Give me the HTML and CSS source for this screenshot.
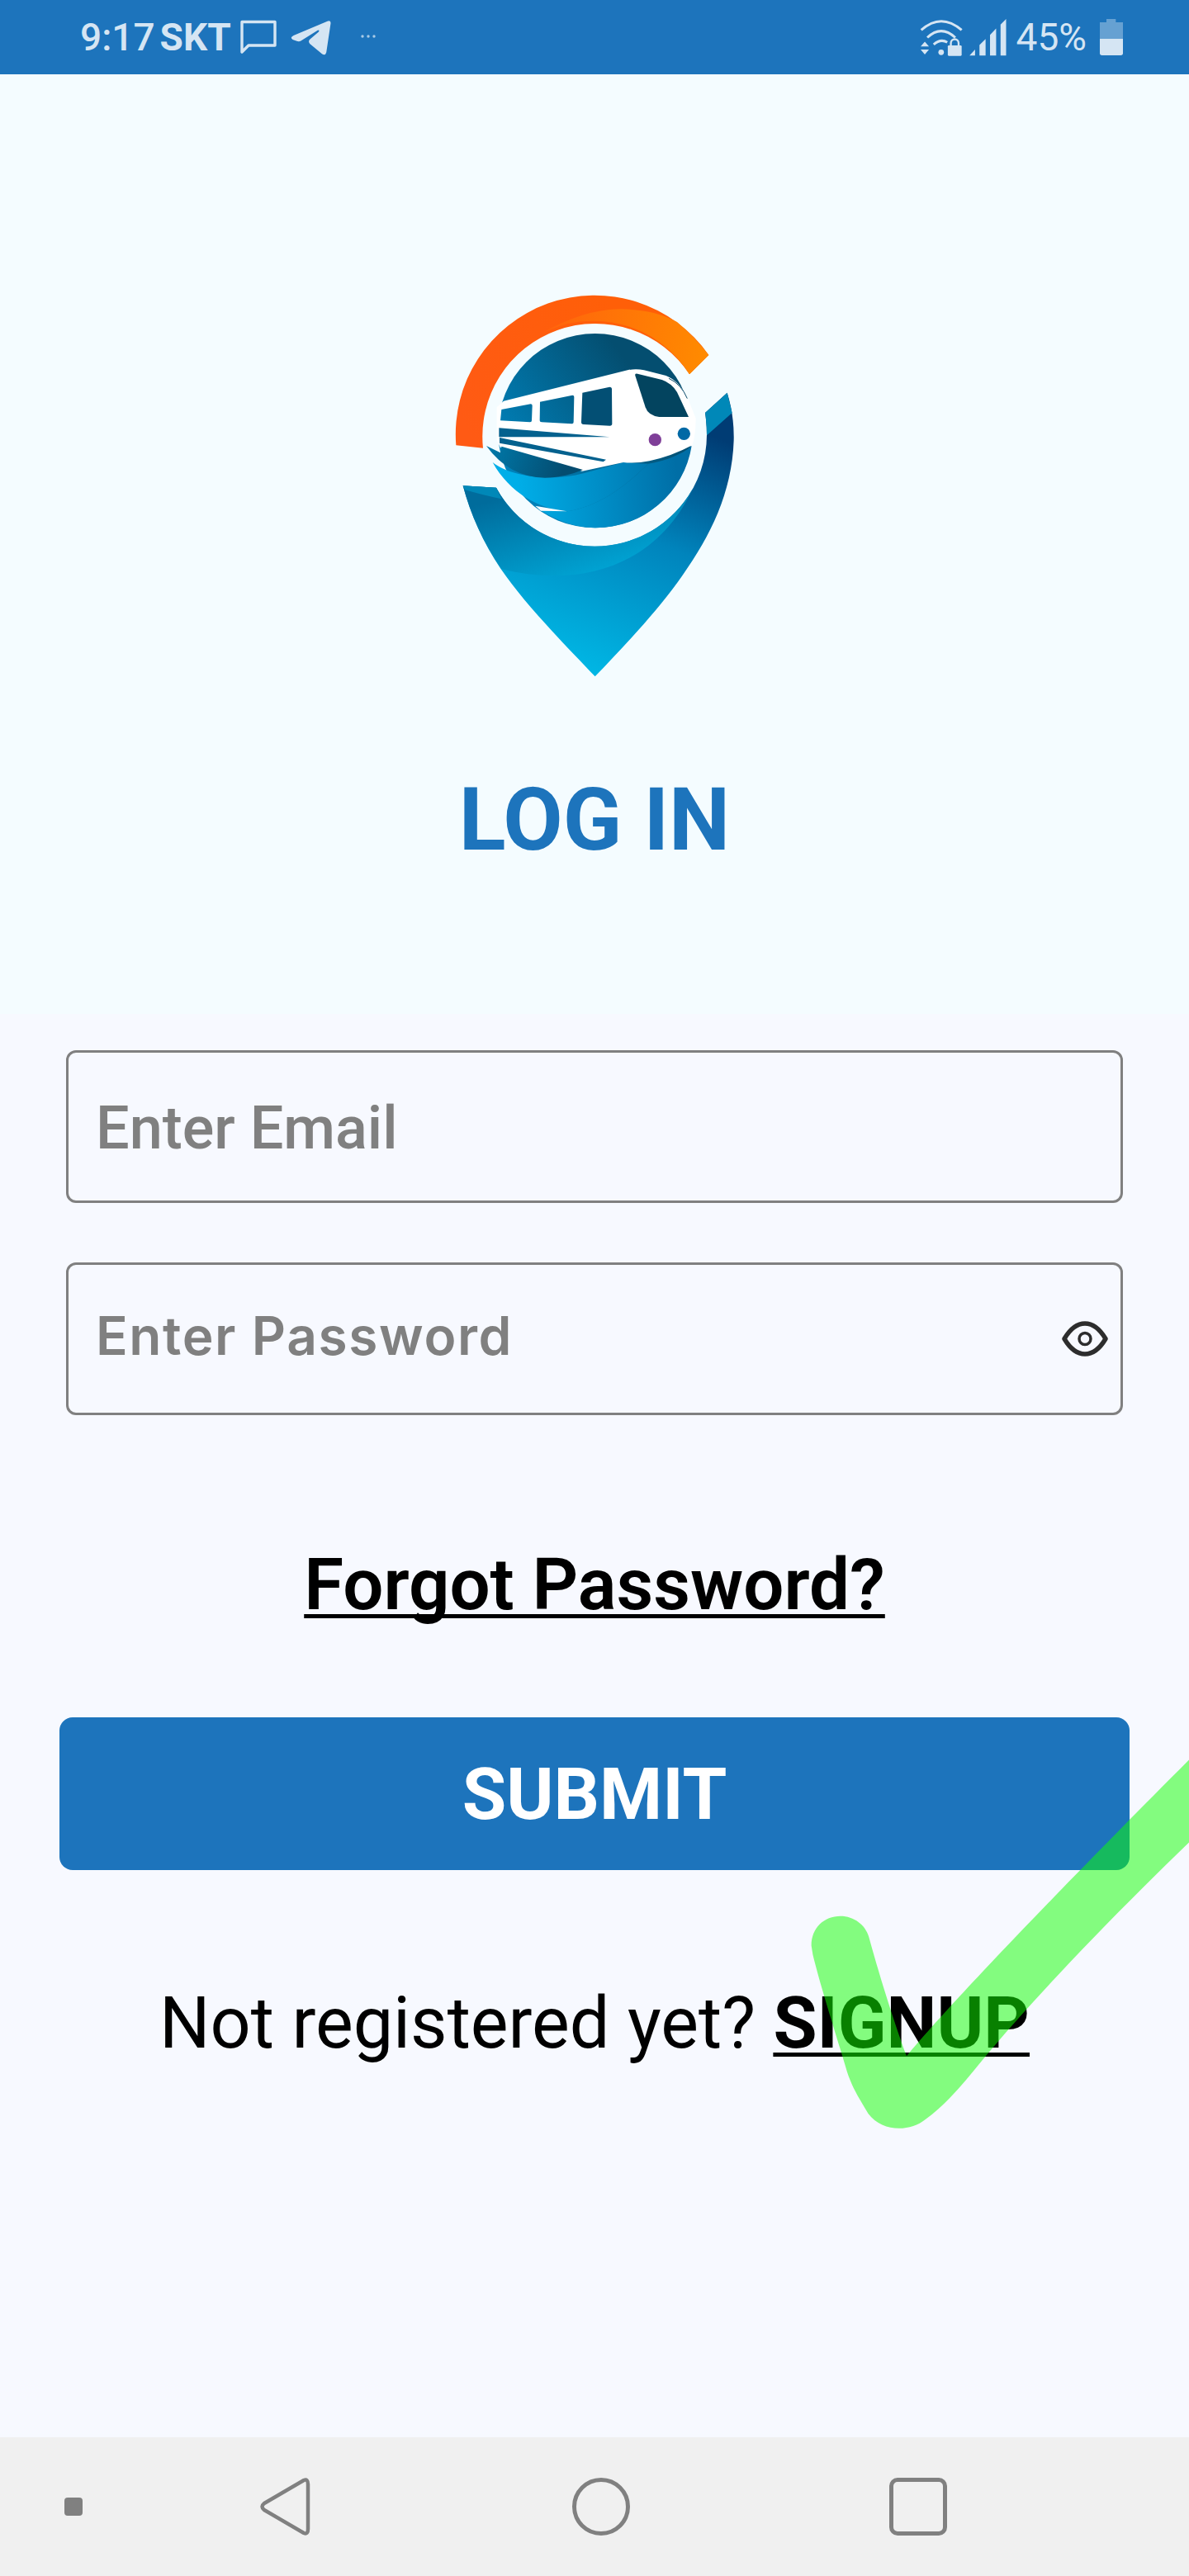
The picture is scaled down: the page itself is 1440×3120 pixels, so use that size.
FILE: index.html
```html
<!DOCTYPE html>
<html lang="en">
<head>
    <meta charset="UTF-8">
    <meta name="viewport" content="width=device-width, initial-scale=1.0">
    <title>Log In</title>
    <link rel="stylesheet" href="styles.css">
</head>
<body>
<div class="app">
    <!-- status bar -->
    <div class="status-bar">
        <div class="status-left">
            <span class="clock">9:17</span>
            <span class="carrier">SKT</span>
            <svg class="icon-chat" viewBox="0 0 44 42"><path d="M2 2.5 H42 V31 H10 L2 39 Z" fill="none" stroke="#d5e5f3" stroke-width="3.4" stroke-linejoin="round"/></svg>
            <svg class="icon-telegram" viewBox="815 45 148 128"><path d="M950 47 Q963 43 962 56 L946 162 Q942 176 930 168 L885 130 Q878 122 885 114 L918 86 Q922 78 914 81 L852 120 Q845 124 835 120 L822 115 Q810 108 825 100 Z" fill="#d5e5f3"/></svg>
            <svg class="icon-dots" viewBox="0 0 18 4"><circle cx="2" cy="2" r="1.7"/><circle cx="9" cy="2" r="1.7"/><circle cx="16" cy="2" r="1.7"/></svg>
        </div>
        <div class="status-right">
            <svg class="icon-wifi" viewBox="35 38 155 134">
                <g fill="none" stroke="#d5e5f3" stroke-width="9">
                    <path d="M40 78 Q112 14 186 78"/>
                    <path d="M62 105 Q112 58 163 105"/>
                    <path d="M85 130 Q110 108 134 122"/>
                </g>
                <circle cx="112" cy="158" r="10" fill="#d5e5f3"/>
                <path d="M38 137 H68 L53 120 Z M38 148 H68 L53 166 Z" fill="#d5e5f3"/>
                <rect x="136" y="133" width="50" height="38" rx="4" fill="#d5e5f3"/>
                <path d="M147 135 V125 A14 14 0 0 1 175 125 V135" fill="none" stroke="#d5e5f3" stroke-width="7"/>
            </svg>
            <svg class="icon-signal" viewBox="218 38 133 134"><path d="M218 170 H238 V148 Z M254 170 H276 V110 L254 132 Z M292 170 H314 V72 L292 95 Z M330 170 H350 V38 L330 58 Z" fill="#d5e5f3"/></svg>
            <span class="battery-text">45%</span>
            <svg class="icon-battery" viewBox="694 40 84 132">
                <path d="M718 40 H752 V52 H778 V112 H694 V52 H718 Z" fill="#d5e5f3" opacity="0.4"/>
                <path d="M694 112 H778 V164 Q778 172 770 172 H702 Q694 172 694 164 Z" fill="#d5e5f3"/>
            </svg>
        </div>
    </div>

    <!-- logo and title -->
    <div class="hero">
        <svg class="logo" viewBox="0 0 1200 1530">
            <defs>
                <linearGradient id="arcRed" gradientUnits="userSpaceOnUse" x1="100" y1="500" x2="700" y2="200"><stop offset="0" stop-color="#ff5a14"/><stop offset="1" stop-color="#ff5f08"/></linearGradient>
                <linearGradient id="arcOrange" gradientUnits="userSpaceOnUse" x1="420" y1="200" x2="1000" y2="300"><stop offset="0" stop-color="#ff640c"/><stop offset="1" stop-color="#ff8a00"/></linearGradient>
                <linearGradient id="disc" gradientUnits="userSpaceOnUse" x1="260" y1="620" x2="700" y2="300"><stop offset="0" stop-color="#0080b8"/><stop offset="1" stop-color="#044e70"/></linearGradient>
                <linearGradient id="wave" gradientUnits="userSpaceOnUse" x1="320" y1="780" x2="900" y2="720"><stop offset="0" stop-color="#00aee8"/><stop offset="1" stop-color="#006ea6"/></linearGradient>
                <linearGradient id="tail" gradientUnits="userSpaceOnUse" x1="220" y1="640" x2="480" y2="740"><stop offset="0" stop-color="#0078a8"/><stop offset="1" stop-color="#044c70"/></linearGradient>
                <linearGradient id="pin" gradientUnits="userSpaceOnUse" x1="1000" y1="580" x2="620" y2="1468"><stop offset="0" stop-color="#003c74"/><stop offset="0.45" stop-color="#0084bc"/><stop offset="1" stop-color="#00b6e4"/></linearGradient>
                <linearGradient id="pinLeft" gradientUnits="userSpaceOnUse" x1="400" y1="780" x2="500" y2="1130"><stop offset="0" stop-color="#006c9c"/><stop offset="1" stop-color="#00a4d4"/></linearGradient>
            </defs>
            <!-- ring -->
            <path d="M97 628 A505 505 0 0 1 1015 300 L945 370 A410 410 0 0 0 195 638 Z" fill="url(#arcRed)"/>
            <path d="M400 226 Q560 132 700 133 Q820 135 900 180 Q965 235 1015 300 L945 370 A410 410 0 0 0 400 226 Z" fill="url(#arcOrange)"/>
            <!-- pin -->
            <path d="M122 775 L243 782 A407 407 0 0 0 1008 590 Q1008 550 1002 510 L1082 437 Q1108 520 1106 610 C1100 800 1020 960 920 1100 C830 1230 700 1365 602 1468 C500 1360 350 1210 258 1075 C195 980 150 880 122 775 Z" fill="url(#pin)"/>
            <path d="M122 775 L243 782 A407 407 0 0 0 957 785 C830 1060 560 1150 262 1078 C195 980 150 880 122 775 Z" fill="url(#pinLeft)"/>
            <path d="M122 775 L243 782 L262 823 Q190 808 130 790 Z" fill="#0088b8"/>
            <path d="M1082 437 L1100 510 L1008 592 Q1008 550 1002 510 Z" fill="#0088b8"/>
            <!-- disc -->
            <circle cx="602" cy="575" r="353" fill="url(#disc)"/>
            <path d="M230 690 C300 745 450 760 560 730 L705 690 L795 695 C720 770 620 850 500 868 C400 860 290 800 230 690 Z" fill="url(#wave)"/>
            <path d="M405 865 L500 868 C620 850 720 770 795 695 C860 685 920 660 953 630 A353 353 0 0 1 602 928 C530 928 460 900 405 865 Z" fill="url(#wave)"/>
            <path d="M385 848 L500 868 L405 866 Z" fill="#f4fcff"/>
            <!-- train -->
            <path d="M270 467 L720 355 Q750 348 780 355 L860 375 Q910 395 940 460 L968 530 Q968 590 955 628 Q880 668 800 685 Q750 695 705 690 L555 722 L258 636 L245 610 L245 490 Z" fill="#fff"/>
            <path d="M207 630 L258 655 L262 632 L558 717 Q490 746 420 746 Q290 745 207 630 Z" fill="url(#tail)"/>
            <path d="M262 498 L368 478 Q374 478 374 484 L372 538 Q372 544 366 544 L258 538 Z" fill="url(#disc)"/>
            <path d="M402 470 L520 446 Q526 446 526 452 L524 544 Q524 550 518 550 L408 544 Q401 544 401 538 Z" fill="url(#disc)"/>
            <path d="M556 437 L655 416 Q663 416 663 424 L664 550 Q664 557 656 557 L560 552 Q552 552 552 544 Z" fill="#034f74"/>
            <path d="M748 375 Q746 366 756 368 L845 390 Q880 402 900 435 L942 525 L835 525 Q795 520 785 490 Z" fill="#03445f"/>
            <path d="M870 385 Q915 405 937 458" fill="none" stroke="#0a4a6a" stroke-width="3"/>
            <path d="M253 565 L655 598 L253 598 Z M255 600 L642 680 L632 688 L255 620 Z" fill="#04618e"/>
            <circle cx="820" cy="608" r="23" fill="#7f3f98"/>
            <circle cx="925" cy="586" r="23" fill="#0069a5"/>
        </svg>
        <h1 class="title">LOG IN</h1>
    </div>

    <!-- form -->
    <form class="login-form">
        <label class="field"><span class="hint-email">Enter Email</span></label>
        <label class="field">
            <span class="hint-password">Enter Password</span>
            <svg class="icon-eye" viewBox="0 0 56 43">
                <path d="M3 21.5 C11 8 19 3 28 3 C37 3 45 8 53 21.5 C45 35 37 40 28 40 C19 40 11 35 3 21.5 Z" fill="none" stroke="#2d2d2d" stroke-width="5.5" stroke-linejoin="round"/>
                <circle cx="28" cy="21.5" r="7" fill="none" stroke="#2d2d2d" stroke-width="3.5"/>
            </svg>
        </label>
        <a href="#" class="forgot-link">Forgot Password?</a>
        <button type="button" class="submit-btn">SUBMIT</button>
        <p class="signup-line">Not registered yet? <a href="#" class="signup-link">SIGNUP</a></p>
    </form>

    <!-- navigation bar -->
    <div class="nav-bar">
        <span class="nav-dot"></span>
        <svg class="nav-back" viewBox="0 0 62 70"><path d="M54 3 Q59 1 59 8 V62 Q59 69 54 67 L6 39 Q1 35 6 31 Z" fill="none" stroke="#808080" stroke-width="4.5" stroke-linejoin="round"/></svg>
        <span class="nav-home"></span>
        <span class="nav-recent"></span>
    </div>

    <!-- green tick drawn over the page -->
    <svg class="tick" viewBox="0 0 1568 1568" preserveAspectRatio="none"><path d="M240 830 C240 770 285 730 342 730 C390 730 430 760 442 800 C470 900 530 1090 575 1205 C700 1060 1000 750 1568 200 L1568 480 C1300 730 1020 1010 840 1220 C780 1290 720 1365 640 1420 C590 1460 490 1465 440 1400 C410 1350 380 1310 360 1240 C320 1110 270 960 245 860 Z" fill="#10ff00" fill-opacity="0.5"/></svg>
</div>
</body>
</html>
```

FILE: styles.css
```css
* {
    box-sizing: border-box;
}
body {
    margin: 0;
    font-family: Roboto, "Liberation Sans", sans-serif;
}
.app {
    position: relative;
    width: 1440px;
    height: 3120px;
    display: flex;
    flex-direction: column;
    background-color: #f7f9ff;
    overflow: hidden;
}

/* status bar */
.status-bar {
    height: 90px;
    display: flex;
    justify-content: space-between;
    align-items: center;
    padding: 0 80px 0 97px;
    background-color: #1d74bc;
    color: #d5e5f3;
    font-size: 46px;
}
.status-left,
.status-right {
    display: flex;
    align-items: center;
}
.clock {
    font-weight: 500;
}
.carrier {
    margin-left: 6px;
    font-weight: 700;
}
.icon-chat {
    width: 44px;
    height: 42px;
    margin: -1px 0 0 11px;
}
.icon-telegram {
    width: 49px;
    height: 42px;
    margin: 1px 0 0 17px;
}
.icon-dots {
    width: 18px;
    height: 4px;
    margin: -2px 0 0 36px;
    fill: #a9cbe6;
}
.icon-wifi {
    width: 52px;
    height: 45px;
}
.icon-signal {
    width: 45px;
    height: 45px;
    margin-left: 8px;
}
.battery-text {
    margin-left: 12px;
}
.icon-battery {
    width: 28px;
    height: 44px;
    margin-left: 16px;
}

/* logo and title */
.hero {
    height: 1138px;
    display: flex;
    flex-direction: column;
    align-items: center;
    padding-top: 240px;
    background-color: #f4fcff;
}
.logo {
    width: 400px;
    height: 510px;
}
.title {
    margin: 93px 0 0;
    font-size: 105px;
    line-height: 122px;
    font-weight: 700;
    color: #1d74bc;
}

/* form */
.login-form {
    flex: 1;
    display: flex;
    flex-direction: column;
    align-items: center;
    padding: 44px 80px 0;
}
.field {
    width: 100%;
    height: 185px;
    display: flex;
    justify-content: space-between;
    align-items: center;
    padding: 0 15px 0 33px;
    border: 3px solid #808080;
    border-radius: 12px;
    color: #808080;
}
.field + .field {
    margin-top: 72px;
}
.hint-email {
    padding-top: 4px;
    font-size: 72px;
    font-weight: 500;
}
.hint-password {
    padding-bottom: 8px;
    font-size: 64px;
    font-weight: 600;
    letter-spacing: 1.6px;
    font-family: Inter, "Liberation Sans", sans-serif;
}
.icon-eye {
    width: 56px;
    height: 43px;
}
.forgot-link {
    margin-top: 156px;
    font-size: 87px;
    font-weight: 600;
    line-height: 98px;
    color: #000;
    text-decoration-thickness: 4.5px;
    text-underline-offset: 6px;
    text-decoration-skip-ink: none;
}
.submit-btn {
    width: 1296px;
    height: 185px;
    flex-shrink: 0;
    margin-top: 112px;
    border: none;
    border-radius: 16px;
    background-color: #1d74bc;
    color: #fff;
    font-family: inherit;
    font-size: 87px;
    font-weight: 700;
}
.signup-line {
    margin: 137px 0 0;
    font-size: 86.3px;
    line-height: 98px;
    color: #000;
}
.signup-link {
    font-weight: 700;
    color: #000;
    text-decoration-thickness: 4.5px;
    text-underline-offset: 6px;
    text-decoration-skip-ink: none;
}

/* navigation bar */
.nav-bar {
    height: 168px;
    display: flex;
    align-items: center;
    padding-left: 78px;
    background-color: #f0f0f0;
}
.nav-dot {
    width: 22px;
    height: 22px;
    border-radius: 4px;
    background-color: #808080;
}
.nav-back {
    width: 62px;
    height: 70px;
    margin-left: 214px;
}
.nav-home {
    width: 70px;
    height: 70px;
    margin-left: 317px;
    border: 5px solid #808080;
    border-radius: 50%;
}
.nav-recent {
    width: 70px;
    height: 70px;
    margin-left: 314px;
    border: 5px solid #808080;
    border-radius: 10px;
}

/* tick lies over the page */
.tick {
    position: absolute;
    left: 900px;
    top: 2060px;
    width: 540px;
    height: 560px;
}
```
